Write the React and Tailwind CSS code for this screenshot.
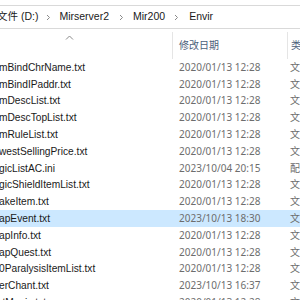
import React from "react";

const rows = [
  ["mBindChrName.txt", "2020/01/13 12:28", "文"],
  ["mBindIPaddr.txt", "2020/01/13 12:28", "文"],
  ["mDescList.txt", "2020/01/13 12:28", "文"],
  ["mDescTopList.txt", "2020/01/13 12:28", "文"],
  ["mRuleList.txt", "2020/01/13 12:28", "文"],
  ["westSellingPrice.txt", "2020/01/13 12:28", "文"],
  ["gicListAC.ini", "2023/10/04 20:15", "配"],
  ["gicShieldItemList.txt", "2020/01/13 12:28", "文"],
  ["akeItem.txt", "2020/01/13 12:28", "文"],
  ["apEvent.txt", "2023/10/13 18:30", "文", true],
  ["apInfo.txt", "2020/01/13 12:28", "文"],
  ["apQuest.txt", "2020/01/13 12:28", "文"],
  ["0ParalysisItemList.txt", "2020/01/13 12:28", "文"],
  ["erChant.txt", "2023/10/13 16:37", "文"],
  ["rtMagic.txt", "2020/01/13 12:28", "文"],
];

const Chevron = () => (
  <svg width="5" height="7" viewBox="0 0 5 7" className="shrink-0">
    <path d="M1 1 L3.5 3.5 L1 6" fill="none" stroke="#8a8a8a" strokeWidth="1" />
  </svg>
);

const latin = { fontFamily: '"Liberation Sans", "Noto Sans CJK SC", sans-serif' };

export default function App() {
  return (
    <div
      className="w-[300px] h-[300px] overflow-hidden bg-white flex flex-col text-[10px]"
      style={{ fontFamily: '"Noto Sans", "Noto Sans CJK SC", sans-serif' }}
    >
      <div
        className="mt-[5px] h-[24px] shrink-0 border-y border-[#d9d9d9] flex items-center text-[#1a1a1a] whitespace-nowrap text-[10.5px]"
        style={latin}
      >
        <span className="ml-[-3px]">文件 (D:)</span>
        <span className="ml-[8px] mr-[8px]"><Chevron /></span>
        <span>Mirserver2</span>
        <span className="ml-[10px] mr-[9px]"><Chevron /></span>
        <span>Mir200</span>
        <span className="ml-[9px] mr-[10px]"><Chevron /></span>
        <span>Envir</span>
      </div>
      <div className="mt-[3px] h-[27px] shrink-0 flex">
        <div className="w-[173px] shrink-0 border-r border-[#e5e5e5] flex items-start pl-[65px] pt-[3px]">
          <svg width="9" height="5" viewBox="0 0 9 5">
            <path d="M1 4.5 L4.5 1 L8 4.5" fill="none" stroke="#8a8a8a" strokeWidth="1" />
          </svg>
        </div>
        <div className="w-[115px] shrink-0 border-r border-[#e5e5e5] flex items-center pl-[6px] text-[#4c607a]">
          修改日期
        </div>
        <div className="flex-1 flex items-center pl-[3px] text-[#4c607a] whitespace-nowrap">类型</div>
      </div>
      <div className="flex flex-col">
        {rows.map(([name, date, type, sel], i) => (
          <div
            key={i}
            className={`h-[16.8px] shrink-0 flex items-center whitespace-nowrap ${sel ? "bg-[#cce8ff]" : ""}`}
          >
            <div className="w-[173px] shrink-0 text-[#1a1a1a] ml-[-1px] text-[10.2px]" style={latin}>
              {name}
            </div>
            <div className="w-[115px] shrink-0 pl-[7px] text-[#6d6d6d]">{date}</div>
            <div className="flex-1 pl-[3px] text-[#6d6d6d]">{type}</div>
          </div>
        ))}
      </div>
    </div>
  );
}
